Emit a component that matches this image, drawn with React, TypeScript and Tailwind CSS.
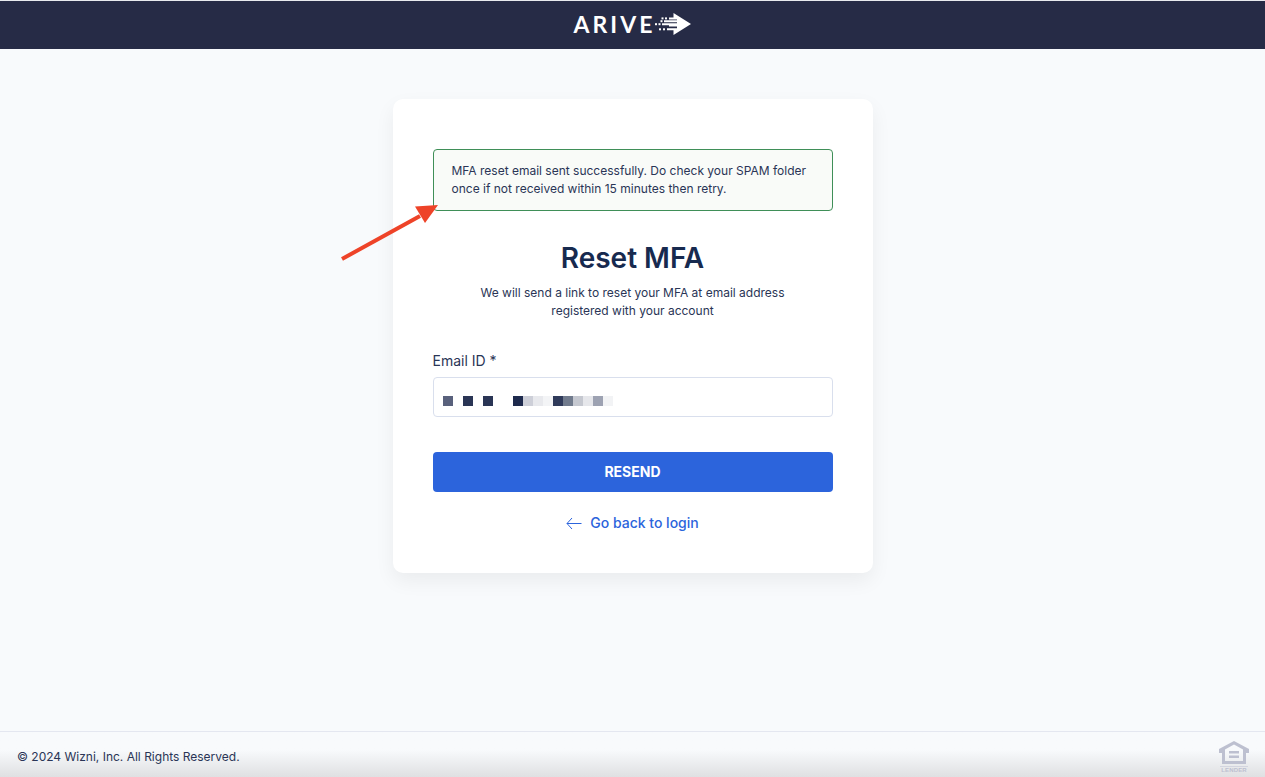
const redactedBlocks = [
  { x: 0, fill: '#59617c' },
  { x: 20, fill: '#2a3555' },
  { x: 40, fill: '#2a3555' },
  { x: 70, fill: '#1e2a4d' },
  { x: 80, fill: '#cdcfd8' },
  { x: 90, fill: '#e8e9ed' },
  { x: 100, fill: '#f3f4f6' },
  { x: 110, fill: '#2f3a5a' },
  { x: 120, fill: '#717b8d' },
  { x: 130, fill: '#c5c8d0' },
  { x: 140, fill: '#e6e7eb' },
  { x: 150, fill: '#9da2b2' },
  { x: 160, fill: '#f2f3f5' },
]

const Logo = () => (
  <div className="flex items-center text-white">
    <span className="font-['Lato',sans-serif] text-[23px] leading-6 font-bold tracking-[3px]">ARIVE</span>
    <svg width="36" height="24" viewBox="0 0 36 24" fill="currentColor" aria-hidden="true">
      <path d="M18.500 1L36 12L18.500 23V18.300H12V16.300H22V14.500H14V13.300H7V11.200H22V10.200H9V8.200H22V7.400H14V5.400H18.500Z" />
      <rect x="0" y="11.200" width="2" height="2" />
      <rect x="3.500" y="11.200" width="2" height="2" />
      <rect x="6.500" y="5.400" width="2" height="2" />
      <rect x="10" y="5.400" width="2" height="2" />
      <rect x="5.500" y="8.200" width="2" height="2" />
      <rect x="4" y="16.300" width="2" height="2" />
      <rect x="8" y="16.300" width="2" height="2" />
    </svg>
  </div>
)

const EqualHousingLender = () => (
  <div className="flex flex-col items-center text-[#bdc0d0]">
    <svg width="30" height="24" viewBox="0 0 30 24" fill="currentColor" role="img" aria-label="Equal housing lender">
      <path fillRule="evenodd" d="M15 0L30 8V12H27V23H3V12H0V8ZM15 3.500L6 8.500V20H24V8.500Z" />
      <rect x="10" y="10" width="10" height="2.500" />
      <rect x="10" y="14.500" width="10" height="2.500" />
    </svg>
    <span className="mt-px h-px w-7 bg-[#d3d5df]" />
    <span className="font-['Liberation_Sans',sans-serif] text-[6px] leading-[6px] font-bold tracking-wide">LENDER</span>
  </div>
)

const App = () => {
  return (
    <div className="flex min-h-screen flex-col bg-[#f8fafc] font-['Inter',sans-serif] text-[#2a3556]">
      <header className="flex h-[49px] items-center justify-center border-t border-[#e8eaee] bg-[#262b46] pb-0.5">
        <Logo />
      </header>

      <main className="flex flex-1 flex-col items-center px-4 py-[50px]">
        <div className="relative w-full max-w-[480px] rounded-[10px] bg-white px-10 pt-[50px] pb-10 shadow-[0_8px_20px_rgba(0,0,0,0.06)]">
          {/* Success message */}
          <div role="status" className="rounded border border-[#3f8f58] bg-[#f9fbf8] px-[18px] py-3 text-xs leading-[18px]">
            MFA reset email sent successfully. Do check your SPAM folder once if not received within 15 minutes then retry.
          </div>

          {/* Pointer to the message */}
          <svg className="absolute top-[104px] -left-[54px]" width="100" height="60" viewBox="0 0 100 60" aria-hidden="true">
            <path d="M3 56L81 13" stroke="#ee4328" strokeWidth="4" />
            <path d="M99 2L76 3.500L86 20Z" fill="#ee4328" />
          </svg>

          <h1 className="mt-[29px] text-center text-[28px] leading-9 font-semibold text-[#172a4f]">Reset MFA</h1>
          <p className="mx-auto mt-2 max-w-[320px] text-center text-xs leading-[18px]">
            We will send a link to reset your MFA at email address registered with your account
          </p>

          <form onSubmit={(e) => e.preventDefault()}>
            <label htmlFor="email" className="mt-[31px] block text-sm leading-5">
              Email ID *
            </label>
            <div className="relative mt-1.5">
              <input
                id="email"
                type="email"
                className="block h-10 w-full rounded border border-[#d9dfed] bg-white px-3 text-sm outline-none"
              />
              <svg className="pointer-events-none absolute top-[19px] left-[10px]" width="170" height="10" aria-hidden="true">
                {redactedBlocks.map((block) => (
                  <rect key={block.x} x={block.x} y="0" width="10" height="10" fill={block.fill} />
                ))}
              </svg>
            </div>
            <button type="submit" className="mt-[35px] block h-10 w-full rounded bg-[#2c64dc] text-sm font-bold text-white">
              RESEND
            </button>
          </form>

          <a href="#login" className="mt-[21px] flex items-center justify-center gap-2 text-sm leading-5 font-medium text-[#2c64dc]">
            <svg width="16" height="12" viewBox="0 0 16 12" fill="none" stroke="currentColor" aria-hidden="true">
              <path d="M6 1L1 6.500L6 12M1 6.500H15.500" />
            </svg>
            Go back to login
          </a>
        </div>
      </main>

      <footer className="flex h-[46px] items-center justify-between border-t border-[#e4e7f0] bg-linear-to-b from-[#f8fafc] from-40% to-[#dfe0e2] pt-1 pr-4 pl-[17px] text-xs">
        <p>© 2024 Wizni, Inc. All Rights Reserved.</p>
        <EqualHousingLender />
      </footer>
    </div>
  )
}

export default App
